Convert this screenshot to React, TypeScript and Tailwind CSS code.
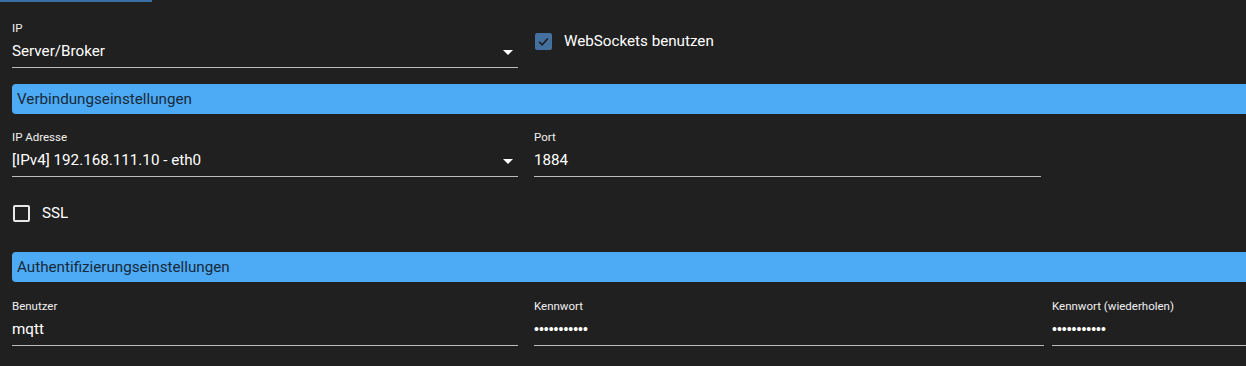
import React from "react";

const Arrow = () => (
  <svg width="10" height="5" viewBox="0 0 10 5" className="mr-[5px] mt-[1px]">
    <path d="M0 0 L10 0 L5 5 Z" fill="#ffffff" />
  </svg>
);

function Field({
  label,
  value,
  width,
  select,
  password,
}: {
  label: string;
  value: string;
  width: string;
  select?: boolean;
  password?: boolean;
}) {
  return (
    <div className={`flex flex-col shrink-0 ${width}`}>
      <div className="text-[11.5px] leading-[14px] text-[#f0f0f0]">{label}</div>
      <div className="mt-[7px] flex items-center justify-between pb-[6px] border-b border-[#bcbcbc]">
        {password ? (
          <span
            className="text-[14px] leading-[19px] text-white"
            style={{ fontFamily: '"Liberation Sans", Arial, sans-serif' }}
          >
            {value}
          </span>
        ) : (
          <span className="text-[15.2px] leading-[19px] text-white">{value}</span>
        )}
        {select && <Arrow />}
      </div>
    </div>
  );
}

const Header = ({ text }: { text: string }) => (
  <div className="h-[30px] bg-[#4dabf5] rounded-l-[4px] flex items-center pl-[5px] text-[15.2px] text-[#17293a] -mr-[20px]">
    {text}
  </div>
);

export default function App() {
  return (
    <div
      className="w-[1246px] h-[366px] bg-[#202020] overflow-hidden"
      style={{ fontFamily: 'Roboto, "Noto Sans", sans-serif' }}
    >
      <div className="w-[152px] h-[2px] bg-[#3c6ea6]" />
      <div className="pl-[12px]">
        {/* Row 1 */}
        <div className="flex mt-[19px]">
          <Field label="IP" value="Server/Broker" width="w-[506px]" select />
          <div className="ml-[17px] mt-[12px] flex items-start">
            <div className="w-[17px] h-[17px] rounded-[2px] bg-[#44709f] flex items-center justify-center">
              <svg width="13" height="13" viewBox="0 0 24 24">
                <path
                  d="M4 12.5 L9.5 18 L20 6.5"
                  fill="none"
                  stroke="#1c1c1c"
                  strokeWidth="3"
                />
              </svg>
            </div>
            <span className="ml-[12px] text-[15.2px] leading-[17px] text-white">
              WebSockets benutzen
            </span>
          </div>
        </div>

        <div className="mt-[16px]">
          <Header text="Verbindungseinstellungen" />
        </div>

        {/* Row 2 */}
        <div className="flex mt-[16px]">
          <Field label="IP Adresse" value="[IPv4] 192.168.111.10 - eth0" width="w-[506px]" select />
          <div className="ml-[16px]">
            <Field label="Port" value="1884" width="w-[507px]" />
          </div>
        </div>

        {/* SSL */}
        <div className="flex items-center mt-[28px] ml-[1px]">
          <div className="w-[17px] h-[17px] rounded-[2px] border-2 border-[#e8e8e8]" />
          <span className="ml-[12px] text-[15.2px] leading-[17px] text-white">SSL</span>
        </div>

        <div className="mt-[30px]">
          <Header text="Authentifizierungseinstellungen" />
        </div>

        {/* Row 3 */}
        <div className="flex mt-[17px]">
          <Field label="Benutzer" value="mqtt" width="w-[506px]" />
          <div className="ml-[16px]">
            <Field label="Kennwort" value="•••••••••••" width="w-[510px]" password />
          </div>
          <div className="ml-[8px]">
            <Field label="Kennwort (wiederholen)" value="•••••••••••" width="w-[220px]" password />
          </div>
        </div>
      </div>
    </div>
  );
}
